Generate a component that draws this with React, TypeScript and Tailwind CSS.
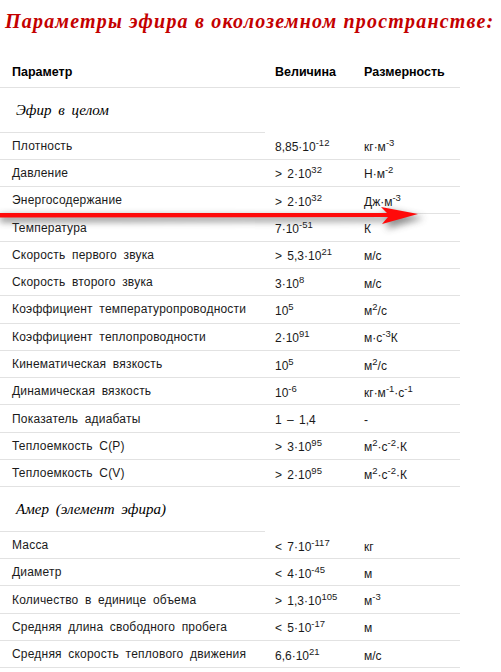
import React from 'react';

type Row = [string, string, string];

const ether: Row[] = [
  ['Плотность', '8,85·10^-12', 'кг·м^-3'],
  ['Давление', '> 2·10^32', 'Н·м^-2'],
  ['Энергосодержание', '> 2·10^32', 'Дж·м^-3'],
  ['Температура', '7·10^-51', 'К'],
  ['Скорость первого звука', '> 5,3·10^21', 'м/с'],
  ['Скорость второго звука', '3·10^8', 'м/с'],
  ['Коэффициент температуропроводности', '10^5', 'м^2/с'],
  ['Коэффициент теплопроводности', '2·10^91', 'м·с^-3К'],
  ['Кинематическая вязкость', '10^5', 'м^2/с'],
  ['Динамическая вязкость', '10^-6', 'кг·м^-1·с^-1'],
  ['Показатель адиабаты', '1 – 1,4', '-'],
  ['Теплоемкость С(Р)', '> 3·10^95', 'м^2·с^-2·К'],
  ['Теплоемкость С(V)', '> 2·10^95', 'м^2·с^-2·К'],
];

const amer: Row[] = [
  ['Масса', '< 7·10^-117', 'кг'],
  ['Диаметр', '< 4·10^-45', 'м'],
  ['Количество в единице объема', '> 1,3·10^105', 'м^-3'],
  ['Средняя длина свободного пробега', '< 5·10^-17', 'м'],
  ['Средняя скорость теплового движения', '6,6·10^21', 'м/с'],
];

// "10^-6" -> 10<sup>-6</sup>
function fmt(s: string) {
  const parts = s.split(/\^([-\d]+)/);
  return parts.map((p, i) =>
    i % 2 ? (
      <sup key={i} className="text-[9.5px] -top-[5px]">{p}</sup>
    ) : (
      <span key={i}>{p}</span>
    )
  );
}

function DataRow({ row }: { row: Row }) {
  return (
    <div className="grid grid-cols-[265px_90px_105px] h-[27.3px] border-b border-[#e2e2e2] items-center">
      <div className="pl-3 [word-spacing:3px] tracking-[0.2px] whitespace-nowrap">{row[0]}</div>
      <div className="pl-[10px] pt-[3px] whitespace-pre [word-spacing:2px]">{fmt(row[1])}</div>
      <div className="pl-[9px] pt-[3px] whitespace-nowrap">{fmt(row[2])}</div>
    </div>
  );
}

function Section({ title }: { title: string }) {
  return (
    <div className="h-[44.5px] flex items-center">
      <div className="w-[265px] h-full flex items-center border-b border-[#e2e2e2] pl-4 font-['Liberation_Serif',serif] italic text-[15px] text-black [word-spacing:3px]">
        {title}
      </div>
    </div>
  );
}

function Arrow() {
  return (
    <svg className="absolute left-0 top-0 pointer-events-none" width="501" height="672">
      <defs>
        <filter id="sh" x="-20%" y="-200%" width="140%" height="500%">
          <feGaussianBlur stdDeviation="3.5" />
        </filter>
      </defs>
      <path
        d="M0 215 L388 216 L383 209 L424 218 L386 229 L390 221 L0 222 Z"
        fill="#444"
        opacity="0.6"
        filter="url(#sh)"
      />
      <path
        d="M0 213 L387 213 L381 207 L418 214 L382 224 L388 217 L0 217.5 Z"
        fill="#ff0a0a"
      />
    </svg>
  );
}

export default function App() {
  return (
    <div className="relative w-[501px] h-[672px] bg-white overflow-hidden font-['Liberation_Sans',Arial,sans-serif] text-[12px] text-[#1a1a1a]">
      <h1 className="h-[60px] pt-[6px] pl-[5px] font-['Liberation_Serif',serif] italic font-bold text-[20px] tracking-[1.2px] text-[#c40000] whitespace-nowrap">
        Параметры эфира в околоземном пространстве:
      </h1>
      <div className="w-[460px]">
        <div className="grid grid-cols-[265px_90px_105px] h-[28px] border-b border-[#e2e2e2] items-end pb-[5px] font-bold text-black text-[12.5px]">
          <div className="pl-3">Параметр</div>
          <div className="pl-[10px]">Величина</div>
          <div className="pl-[9px]">Размерность</div>
        </div>
        <Section title="Эфир в целом" />
        {ether.map((r) => (
          <DataRow key={r[0]} row={r} />
        ))}
        <Section title="Амер (элемент эфира)" />
        {amer.map((r) => (
          <DataRow key={r[0]} row={r} />
        ))}
      </div>
      <Arrow />
    </div>
  );
}
